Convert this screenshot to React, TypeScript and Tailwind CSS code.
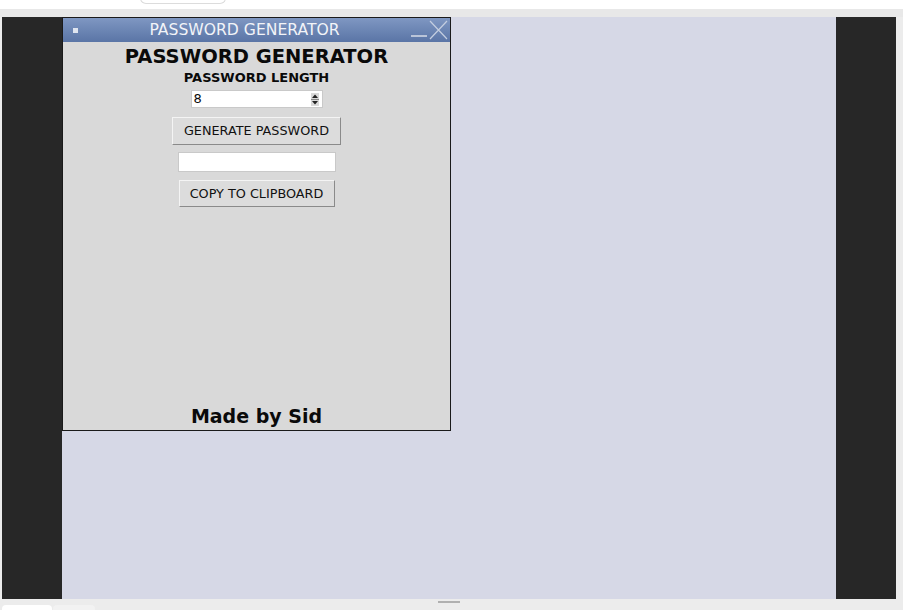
import * as React from 'react'

// Tk-style button with raised bevel
function TkButton({ children, className }: { children: React.ReactNode; className: string }) {
  return (
    <div
      className={`flex items-center justify-center border border-t-[#f4f4f4] border-l-[#f4f4f4] border-r-[#8a8a8a] border-b-[#8a8a8a] bg-[#dcdcdc] text-[12.8px] text-[#111] ${className}`}
    >
      {children}
    </div>
  )
}

function SpinArrows() {
  return (
    <svg width="8" height="13" viewBox="0 0 8 13">
      <rect x="0" y="0" width="8" height="13" fill="#d9d9d9" />
      <path d="M4 1.5 L7 5 L1 5 Z" fill="#222" />
      <path d="M4 11.5 L7 8 L1 8 Z" fill="#222" />
      <line x1="0" y1="6.5" x2="8" y2="6.5" stroke="#888" strokeWidth="1" />
    </svg>
  )
}

function TitleBar() {
  return (
    <div className="flex h-6 items-center bg-gradient-to-b from-[#7f97c2] to-[#5a75a6] pl-[10px] pr-[2px]">
      <div className="h-[5px] w-[5px] bg-[#dfe5f0]" />
      <div className="mt-[2px] flex-1 text-center text-[15.6px] leading-none text-[#f2f4f8]">PASSWORD GENERATOR</div>
      <div className="flex items-end gap-[1px]">
        <div className="mb-[3px] h-[2px] w-[16px] bg-[#b9c4d8]" />
        <svg width="20" height="20" viewBox="0 0 20 20">
          <path d="M2 19 L19 1 M2 1 L19 19" stroke="#c4cee0" strokeWidth="1.2" fill="none" />
        </svg>
      </div>
    </div>
  )
}

export default function App() {
  return (
    <div
      className="flex h-[610px] w-[903px] flex-col overflow-hidden bg-[#ececec]"
      style={{ fontFamily: '"DejaVu Sans", Verdana, sans-serif' }}
    >
      {/* Top strip */}
      <div className="relative h-[9px] bg-white">
        <div className="absolute left-[140px] top-[-2px] h-[6px] w-[86px] rounded-b-md border border-[#dcdcdc] bg-white" />
      </div>
      <div className="h-[8px] bg-[#e8e8e8]" />

      {/* Desktop area */}
      <div className="flex h-[582px] pl-[2px] pr-[7px]">
        <div className="w-[60px] bg-[#272727]" />
        <div className="flex-1 bg-[#d6d8e6]">
          <div className="flex h-[414px] w-[389px] flex-col border border-[#1a1a1a] bg-[#d9d9d9]">
            <TitleBar />
            <div className="flex flex-1 flex-col items-center text-[#0a0a0a]">
              <div className="mt-[3px] text-[19.5px] font-bold leading-[24px]">PASSWORD GENERATOR</div>
              <div className="mt-[1px] text-[13px] font-bold leading-[16px]">PASSWORD LENGTH</div>
              <div className="mt-[4px] flex h-[18px] w-[132px] items-center justify-between border border-[#c9c9c9] bg-white pl-[2px] pr-[3px] text-[13px]">
                <span>8</span>
                <SpinArrows />
              </div>
              <TkButton className="mt-[9px] h-[28px] w-[169px]">GENERATE PASSWORD</TkButton>
              <div className="mt-[7px] h-[20px] w-[158px] border border-[#c9c9c9] bg-white" />
              <TkButton className="mt-[8px] h-[27px] w-[156px]">COPY TO CLIPBOARD</TkButton>
              <div className="flex-1" />
              <div className="mb-[2px] text-[19px] font-bold leading-[24px]">Made by Sid</div>
            </div>
          </div>
        </div>
        <div className="w-[60px] bg-[#272727]" />
      </div>

      {/* Bottom strip */}
      <div className="relative flex-1">
        <div className="absolute left-[438px] top-[2px] h-[2px] w-[22px] bg-[#b0b0b0]" />
        <div className="absolute left-[2px] top-[6px] h-[10px] w-[50px] rounded-t-sm bg-white" />
        <div className="absolute left-[53px] top-[6px] h-[10px] w-[42px] rounded-t-sm bg-[#f2f2f2]" />
      </div>
    </div>
  )
}
